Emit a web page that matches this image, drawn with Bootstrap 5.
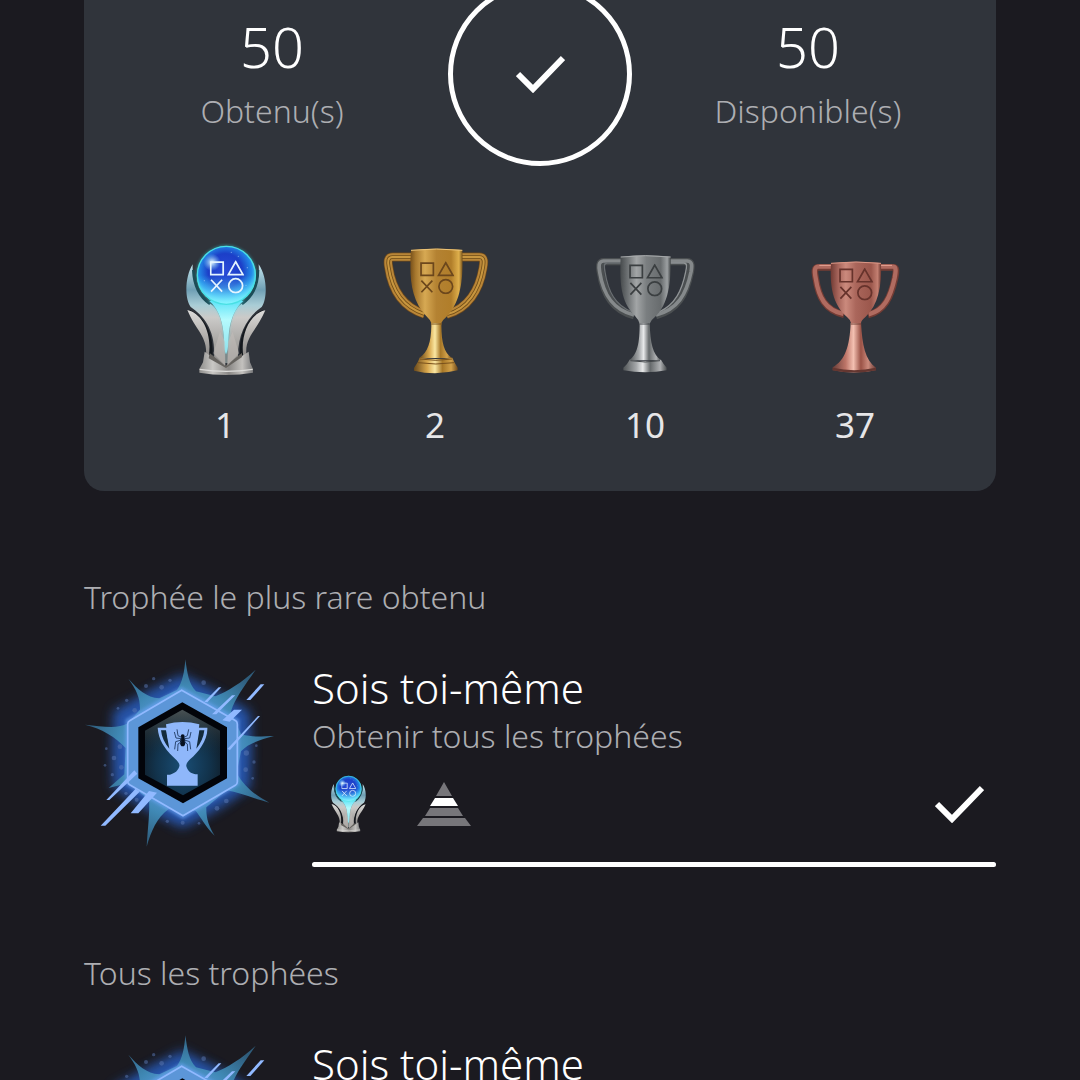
<!DOCTYPE html>
<html lang="fr">
<head>
<meta charset="utf-8">
<meta name="viewport" content="width=device-width, initial-scale=1">
<title>Trophées</title>
<link href="https://cdn.jsdelivr.net/npm/bootstrap@5.3.0/dist/css/bootstrap.min.css" rel="stylesheet">
<style>
body{background:#1b1a20;color:#fff;font-family:"Noto Sans","Open Sans",sans-serif;font-weight:300;height:100vh;overflow:hidden}
.page{padding:0 84px}
.summary{background:#30343b;border-radius:0 0 20px 20px;padding-bottom:46px}
.stats{padding:0 54px}
.stat{padding-top:12px}
.stat-value{font-size:56px;line-height:68px}
.stat-label,.section-title,.trophy-text{font-size:32px;line-height:40px;color:#adaeb2;margin:0}
.stat-label{margin-top:11px}
.ring{width:184px;height:184px;border:5px solid #fff;border-radius:50%;margin-top:-18px}
.tiers{padding:0 36px;margin-top:69px}
.tier svg{display:block;margin:0 auto}
.tier-count{font-size:35px;line-height:40px;font-weight:400;color:#e6e6e8;margin-top:20px}
.section-title{margin-top:86px;margin-bottom:39px}
.trophy{gap:36px}
.trophy-name{font-size:42px;line-height:56px;font-weight:300;margin:4px 0 0}
.trophy-icons{gap:45px;padding:0 12px;margin-top:15px}
.trophy-bar{height:5px;margin-top:25px;background:#55565a}
.trophy-bar .progress-bar{background:#fff}
</style>
<script src="https://cdn.jsdelivr.net/npm/bootstrap@5.3.0/dist/js/bootstrap.bundle.min.js"></script>
</head>
<body>
<svg width="0" height="0" class="position-absolute" aria-hidden="true">
<defs>
<radialGradient id="orb" cx=".48" cy=".42" r=".58"><stop offset="0" stop-color="#2a4ad8"/><stop offset=".5" stop-color="#1c3fc8"/><stop offset=".78" stop-color="#238be8"/><stop offset="1" stop-color="#5ff0f3"/></radialGradient>
<radialGradient id="shine"><stop offset="0" stop-color="#e8fbff"/><stop offset="1" stop-color="#7fd4ff" stop-opacity="0"/></radialGradient>
<linearGradient id="orbLow" x2="0" y2="1"><stop offset=".5" stop-color="#49d5ff" stop-opacity="0"/><stop offset="1" stop-color="#8af6ff"/></linearGradient>
<linearGradient id="wing" gradientUnits="userSpaceOnUse" x1="0" y1="88" x2="0" y2="394"><stop offset="0" stop-color="#c4e6ee"/><stop offset=".25" stop-color="#6f9fb4"/><stop offset=".4" stop-color="#a9cdd6"/><stop offset=".52" stop-color="#cbcac8"/><stop offset=".75" stop-color="#aaa8a5"/><stop offset="1" stop-color="#8b8987"/></linearGradient>
<linearGradient id="fin" x2="0" y2="1"><stop offset="0" stop-color="#dddcda"/><stop offset=".5" stop-color="#b7b4b1"/><stop offset="1" stop-color="#8b8987"/></linearGradient>
<linearGradient id="beam" x2="0" y2="1"><stop offset="0" stop-color="#5fe4f8"/><stop offset=".35" stop-color="#b5fafd"/><stop offset="1" stop-color="#8ce0ec"/></linearGradient>
<linearGradient id="pbase"><stop offset="0" stop-color="#8e8d8b"/><stop offset=".25" stop-color="#c9c8c5"/><stop offset=".55" stop-color="#8a8886"/><stop offset=".8" stop-color="#c3c1be"/><stop offset="1" stop-color="#77787a"/></linearGradient>
<filter id="soft" x="-30%" y="-30%" width="160%" height="160%"><feGaussianBlur stdDeviation="5"/></filter>
<filter id="haze" x="-40%" y="-40%" width="180%" height="180%"><feGaussianBlur stdDeviation="18"/></filter>
<linearGradient id="goldCup"><stop offset="0" stop-color="#77501b"/><stop offset=".1" stop-color="#a7782e"/><stop offset=".28" stop-color="#d7a953"/><stop offset=".5" stop-color="#b48232"/><stop offset=".78" stop-color="#b17e2a"/><stop offset=".93" stop-color="#dfb04c"/><stop offset="1" stop-color="#74501b"/></linearGradient>
<linearGradient id="goldFoot"><stop offset="0" stop-color="#69491b"/><stop offset=".3" stop-color="#d7a64c"/><stop offset=".48" stop-color="#fae7a2"/><stop offset=".65" stop-color="#a77727"/><stop offset=".85" stop-color="#d3a24a"/><stop offset="1" stop-color="#6e491b"/></linearGradient>
<linearGradient id="silverCup"><stop offset="0" stop-color="#474b4d"/><stop offset=".15" stop-color="#6f7375"/><stop offset=".32" stop-color="#a2a5a6"/><stop offset=".52" stop-color="#7a7e80"/><stop offset=".8" stop-color="#686c6e"/><stop offset=".93" stop-color="#9ca0a2"/><stop offset="1" stop-color="#424648"/></linearGradient>
<linearGradient id="silverFoot"><stop offset="0" stop-color="#505456"/><stop offset=".3" stop-color="#a5a8aa"/><stop offset=".45" stop-color="#e8e9ea"/><stop offset=".62" stop-color="#65696b"/><stop offset=".85" stop-color="#afb1b3"/><stop offset="1" stop-color="#484c4e"/></linearGradient>
<linearGradient id="bronzeCup"><stop offset="0" stop-color="#713b34"/><stop offset=".15" stop-color="#a7655b"/><stop offset=".3" stop-color="#cb8a7d"/><stop offset=".5" stop-color="#aa665b"/><stop offset=".8" stop-color="#9b574c"/><stop offset=".93" stop-color="#c37f71"/><stop offset="1" stop-color="#6b372f"/></linearGradient>
<linearGradient id="bronzeFoot"><stop offset="0" stop-color="#673d38"/><stop offset=".3" stop-color="#bd7568"/><stop offset=".48" stop-color="#f3c0b1"/><stop offset=".65" stop-color="#9a5246"/><stop offset=".82" stop-color="#cb8a7c"/><stop offset="1" stop-color="#693b35"/></linearGradient>
<radialGradient id="hexFill" cx=".5" cy=".65" r=".6"><stop offset="0" stop-color="#194e76"/><stop offset=".6" stop-color="#12334c"/><stop offset="1" stop-color="#101c26"/></radialGradient>
<linearGradient id="hexTop" x2="0" y2="1"><stop offset="0" stop-color="#686f6c" stop-opacity=".65"/><stop offset="1" stop-color="#1c3647" stop-opacity="0"/></linearGradient>
<radialGradient id="burst" gradientUnits="userSpaceOnUse" cx="322" cy="312" r="290"><stop offset=".4" stop-color="#5f9de3"/><stop offset=".68" stop-color="#3f88b4"/><stop offset="1" stop-color="#2f5d7c"/></radialGradient>
</defs>
<symbol id="shapes" viewBox="0 0 100 96"><path d="M3 5h36v36H3zM75 4l21 37H54zM4 56l32 34M36 56L4 90" fill="none" stroke="currentColor" stroke-width="5"/><circle cx="75" cy="73" r="20" fill="none" stroke="currentColor" stroke-width="5"/></symbol>
<symbol id="platinum" viewBox="0 0 330 450">
<circle cx="169" cy="122" r="91" fill="#35d9dc" opacity=".5" filter="url(#soft)"/>
<path d="M118 205Q169 235 218 205L205 280L184 384H154L130 280Z" fill="#7c8788"/>
<path d="M68 88C45 125 43 190 62 216C104 244 138 290 132 370L166 396L163 335C161 275 152 228 122 207C84 180 66 145 68 88ZM266 88C292 125 293 190 275 216C236 242 202 292 204 370L172 396L176 335C176 275 187 228 214 207C252 180 270 145 266 88Z" fill="url(#wing)"/>
<path d="M70 105C72 158 92 188 120 207M264 105C263 158 245 186 216 207" fill="none" stroke="#1c4c57" stroke-width="8"/>
<path d="M112 196C140 215 158 245 161 285C164 310 160 335 168 358C178 335 175 310 177 285C180 245 200 215 226 196Z" fill="#5fe6f5" opacity=".6" filter="url(#soft)"/>
<path d="M118 198C141 217 156 250 160 290C164 315 160 340 168 358C177 340 174 315 177 290C182 250 197 217 220 198Z" fill="url(#beam)"/>
<circle cx="169" cy="121" r="88" fill="url(#orb)"/><circle cx="169" cy="121" r="88" fill="url(#orbLow)"/><circle cx="169" cy="121" r="87" fill="none" stroke="#49dfe4" stroke-width="4"/>
<circle cx="126" cy="82" r="26" fill="url(#shine)"/>
<g fill="#a8d4ff" opacity=".6"><circle cx="205" cy="64" r="2"/><circle cx="103" cy="137" r="2"/><circle cx="232" cy="98" r="2"/><circle cx="184" cy="52" r="2"/><circle cx="228" cy="151" r="2"/></g>
<use href="#shapes" x="119" y="76" width="104" height="100" color="#e4f4ff"/>
<path d="M58 224C110 246 136 310 126 372L112 362C114 310 90 270 58 224ZM280 224C228 246 202 310 211 372L224 362C222 310 246 270 280 224Z" fill="#15191e"/>
<path d="M52 225C96 234 128 296 116 364L108 356C112 305 76 284 52 225ZM286 226C242 234 210 296 220 364L229 356C225 305 262 284 286 226Z" fill="url(#fin)"/>
<path d="M104 350L166 394L236 350L240 382L249 402V413Q169 427 88 413V402L99 382Z" fill="url(#pbase)"/><path d="M119 354L166 393L216 354L216 366L168 399L116 370Z" fill="#66635f"/>
<path d="M130 355L166 392L165 320L150 290ZM207 355L172 392L174 320L188 290Z" fill="#c2beba" opacity=".55"/>
<path d="M89 403Q169 415 248 403" fill="none" stroke="#dedddb" stroke-width="4"/>
</symbol>
<symbol id="mysteryBadge" viewBox="27 24 576 576">
<path d="M322 80L525 190V420L322 540L115 420V190Z" fill="#2a68d8" opacity=".75" filter="url(#haze)"/>
<circle cx="322" cy="312" r="205" fill="#2557ac" opacity=".35" filter="url(#haze)"/>
<path d="M331 34C337 75 341 108 363 130L421 145C458 129 499 105 542 65C507 116 480 151 468 190L498 258C535 270 561 264 597 264C555 276 520 285 498 310L485 375C510 419 541 441 583 464C530 450 494 433 455 427L394 478C393 512 402 535 419 563C390 535 377 506 362 488L280 484C245 510 229 549 215 596C218 541 225 493 222 455L160 405L101 420L148 379L152 300C123 268 81 242 30 230C82 235 128 244 158 226L195 185C196 151 185 126 160 92C189 124 214 148 253 151L306 126C323 102 328 72 331 34Z" fill="url(#burst)"/>
<path d="M320 127L484 220V405L324 503L160 405V220Z" fill="none" stroke="#6aa4f4" stroke-width="18" opacity=".6" filter="url(#soft)"/>
<g fill="#5a78b4" opacity=".5"><circle cx="213" cy="114" r="6"/><circle cx="236" cy="92" r="5"/><circle cx="285" cy="97" r="5"/><circle cx="260" cy="118" r="7"/><circle cx="386" cy="104" r="7"/><circle cx="155" cy="157" r="5"/><circle cx="179" cy="187" r="7"/><circle cx="129" cy="181" r="4"/><circle cx="135" cy="296" r="7"/><circle cx="117" cy="330" r="7"/><circle cx="94" cy="302" r="4"/><circle cx="90" cy="352" r="4"/><circle cx="139" cy="358" r="7"/><circle cx="112" cy="380" r="5"/><circle cx="153" cy="436" r="5"/><circle cx="185" cy="455" r="6"/><circle cx="277" cy="520" r="5"/><circle cx="323" cy="524" r="6"/><circle cx="372" cy="526" r="4"/><circle cx="426" cy="481" r="7"/><circle cx="454" cy="459" r="7"/><circle cx="514" cy="315" r="8"/><circle cx="544" cy="293" r="4"/><circle cx="537" cy="342" r="5"/><circle cx="512" cy="365" r="7"/><circle cx="533" cy="391" r="4"/></g>
<path d="M320 127L482 218Q487 222 487 229V401Q487 408 481 412L324 503L164 410Q158 407 158 399V229Q158 221 164 218Z" fill="#5c96d8" stroke="#91b9ff" stroke-width="5"/>
<path d="M322 163L456 238V391L324 466L190 391V238Z" fill="#02040a"/><path d="M322 185L435 248V380L324 442L210 380V248Z" fill="url(#hexFill)"/><path d="M322 185L435 248V320H210V248Z" fill="url(#hexTop)"/>
<path d="M248 239H397C399 276 370 313 346 333C337 342 331 350 335 358C340 370 347 376 361 379H368V413H276V380H285C300 376 309 369 313 355C316 345 303 335 294 326C267 299 251 276 248 239Z" fill="#8fb7fa"/>
<path d="M258 247H273L283 302C269 286 260 268 258 247ZM388 247H373L364 302C377 286 386 268 388 247Z" fill="#142b3c"/><path d="M273 229Q322 215 373 229L368 269Q360 306 339 330H306Q285 305 278 269Z" fill="#8fb7fa"/>
<ellipse cx="323" cy="266" rx="6" ry="7" fill="#07101f"/><ellipse cx="323" cy="281" rx="8" ry="14" fill="#07101f"/><path d="M320 268L309 263L306 244M327 268L337 263L341 244M319 272L303 270L298 252M328 272L344 270L348 252M319 276L302 281L299 304M328 276L344 281L347 304M319 281L309 288L308 309M328 281L337 288L338 309" fill="none" stroke="#2c4873" stroke-width="3"/>
<g fill="#91b9ff"><path d="M431 118H439L397 163L388 161ZM471 142H481L424 199H411ZM477 185H501L464 221L442 217ZM549 204H555L465 306L457 303ZM557 109H568L526 156H514ZM178 367L187 377L103 456H94ZM182 422L194 431L91 533H77ZM222 429L246 434L190 496H167Z"/></g>
</symbol>
<symbol id="tick" viewBox="0 0 49 38"><path d="M2 19L17 34L47 3" fill="none" stroke="#fff" stroke-width="6"/></symbol>
</svg>

<main class="page">
<section class="summary">
<div class="stats row g-0 text-center">
<div class="col stat"><div class="stat-value">50</div><p class="stat-label">Obtenu(s)</p></div>
<div class="col"><div class="ring mx-auto d-flex align-items-center justify-content-center"><svg width="49" height="38" role="img" aria-label="Terminé"><use href="#tick"/></svg></div></div>
<div class="col stat"><div class="stat-value">50</div><p class="stat-label">Disponible(s)</p></div>
</div>
<div class="tiers row g-0 text-center">
<div class="col tier"><svg width="110" height="150"><use href="#platinum"/></svg><div class="tier-count">1</div></div>
<div class="col tier"><svg width="130" height="150" viewBox="-15 0 390 450">
<g fill="none" stroke-linejoin="round"><path d="M112 66H53C38 66 38 79 41 96C51 166 83 216 148 237M260 66H313C329 66 327 82 324 99C313 165 279 221 215 238" stroke="#6e491b" stroke-width="27"/><path d="M112 66H53C38 66 38 79 41 96C51 166 83 216 148 237M260 66H313C329 66 327 82 324 99C313 165 279 221 215 238" stroke="#b98638" stroke-width="23"/><path d="M112 66H53C38 66 38 79 41 96C51 166 83 216 148 237M260 66H313C329 66 327 82 324 99C313 165 279 221 215 238" stroke="#704d17" stroke-width="11"/><path d="M112 66H53C38 66 38 79 41 96C51 166 83 216 148 237M260 66H313C329 66 327 82 324 99C313 165 279 221 215 238" stroke="#c8963f" stroke-width="6"/></g>
<path d="M108 45Q185 37 262 45C265 128 260 199 213 247Q202 256 199 264H169Q166 254 153 242C108 195 102 129 108 45Z" fill="url(#goldCup)"/><path d="M108 46Q185 38 262 46" fill="none" stroke="#edc478" stroke-width="3"/>
<use href="#shapes" x="135" y="79" width="103" height="99" color="#6c471c"/>
<path d="M168 264H200L199 272C200 323 206 351 231 369H133C159 350 168 322 169 272Z" fill="url(#goldFoot)"/><path d="M134 368Q182 376 232 368L239 383L248 398V406Q181 423 117 407V399L128 382Z" fill="url(#goldFoot)"/><path d="M134 372Q182 380 232 372M129 383Q182 391 237 383M168 267H201" fill="none" stroke="#79511c" stroke-width="3"/>
</svg><div class="tier-count">2</div></div>
<div class="col tier"><svg width="120" height="150" viewBox="0 0 360 450">
<g fill="none" stroke-linejoin="round"><path d="M112 80H57C42 80 43 94 46 111C57 181 85 226 147 242M251 80H305C321 80 319 94 316 111C302 179 278 225 213 242" stroke="#4b4f51" stroke-width="22"/><path d="M112 78H55C40 79 41 94 44 111C55 181 85 225 147 240M251 78H307C323 79 321 94 318 111C304 179 278 223 213 240" stroke="#85898b" stroke-width="11"/><path d="M112 84H67C56 84 57 94 60 111C69 169 90 211 142 231" stroke="#6a6f72" stroke-width="4"/><path d="M253 84H296C308 84 305 97 302 111C291 166 271 209 222 231" stroke="#8f9395" stroke-width="4"/></g>
<path d="M107 65Q181 57 257 65C259 141 251 207 209 247Q197 256 194 266H164Q160 253 150 243C106 199 104 141 107 65Z" fill="url(#silverCup)"/><path d="M107 66Q181 58 257 66" fill="none" stroke="#a5a8aa" stroke-width="3"/>
<use href="#shapes" x="132" y="86" width="103" height="99" color="#3b3f41"/>
<path d="M164 264H194C196 325 203 359 228 375H133C157 358 164 326 164 264Z" fill="url(#silverFoot)"/><path d="M134 374Q181 381 228 374L236 387L245 398V406Q181 418 115 406V398L126 387Z" fill="url(#silverFoot)"/><path d="M136 377Q181 385 225 377M164 267H194" fill="none" stroke="#43474a" stroke-width="3"/>
</svg><div class="tier-count">10</div></div>
<div class="col tier"><svg width="110" height="150" viewBox="0 0 330 450">
<g fill="none" stroke-linejoin="round"><path d="M98 97H56C43 97 43 108 47 129C56 188 76 226 132 239M239 97H279C292 97 288 112 285 129C272 188 253 228 204 240" stroke="#743c34" stroke-width="20"/><path d="M98 95H54C43 96 43 108 47 129C56 188 76 225 130 237M239 95H280C290 96 287 112 284 129C271 188 253 226 206 238" stroke="#b06b60" stroke-width="13"/><path d="M98 91H58M239 91H276" stroke="#e8a697" stroke-width="3"/></g>
<path d="M93 84Q168 76 243 84C246 154 234 210 197 245Q184 255 183 264H153Q151 254 141 246C97 207 89 153 93 84Z" fill="url(#bronzeCup)"/><path d="M93 85Q168 77 243 85" fill="none" stroke="#da9786" stroke-width="3"/>
<use href="#shapes" x="117" y="98" width="103" height="99" color="#67332c"/>
<path d="M152 264H183C187 330 195 375 228 398V406Q163 419 98 406V397C135 376 149 334 152 264Z" fill="url(#bronzeFoot)"/><path d="M98 402Q163 416 228 402" fill="none" stroke="#643630" stroke-width="7"/><path d="M152 267H184" stroke="#713f35" stroke-width="3"/>
</svg><div class="tier-count">37</div></div>
</div>
</section>

<section>
<h2 class="section-title fw-light">Trophée le plus rare obtenu</h2>
<article class="trophy d-flex">
<svg class="flex-shrink-0" width="192" height="192"><use href="#mysteryBadge"/></svg>
<div class="flex-grow-1">
<h3 class="trophy-name">Sois toi-même</h3><p class="trophy-text">Obtenir tous les trophées</p>
<div class="trophy-icons d-flex align-items-center"><svg width="48" height="66"><use href="#platinum"/></svg>
<svg width="54" height="44" viewBox="0 0 54 44"><path d="M27 0L35 14H19ZM13 26H41L46 34H8ZM6 36H48L54 44H0Z" fill="#77767a"/><path d="M18 16H36L41 24H13Z" fill="#fff"/></svg>
<svg class="ms-auto" width="49" height="38" role="img" aria-label="Obtenu"><use href="#tick"/></svg></div>
<div class="progress trophy-bar" role="progressbar" aria-label="Progression" aria-valuenow="100" aria-valuemin="0" aria-valuemax="100"><div class="progress-bar w-100"></div></div>
</div>
</article>
</section>

<section>
<h2 class="section-title fw-light">Tous les trophées</h2>
<article class="trophy d-flex">
<svg class="flex-shrink-0" width="192" height="192"><use href="#mysteryBadge"/></svg>
<div class="flex-grow-1"><h3 class="trophy-name">Sois toi-même</h3></div>
</article>
</section>
</main>
</body>
</html>
